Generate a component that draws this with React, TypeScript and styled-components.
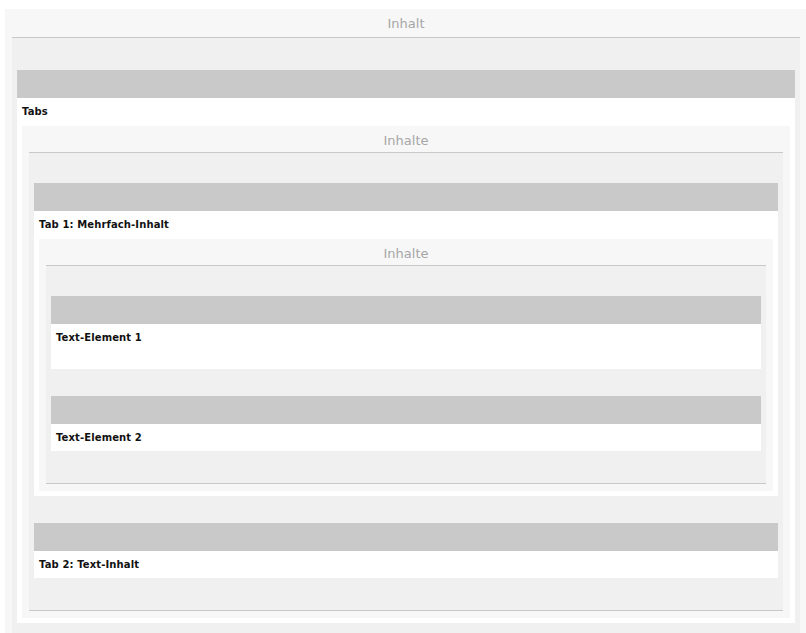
import React from "react";
import styled, {createGlobalStyle} from "styled-components";

type Node = {
    label: string;
    filler?: number;
    children?: {title: string; items: Node[]};
};

const tree: {title: string; items: Node[]} = {
    title: "Inhalt",
    items: [{
        label: "Tabs",
        children: {
            title: "Inhalte",
            items: [
                {
                    label: "Tab 1: Mehrfach-Inhalt",
                    children: {
                        title: "Inhalte",
                        items: [
                            {label: "Text-Element 1", filler: 18},
                            {label: "Text-Element 2"},
                        ],
                    },
                },
                {label: "Tab 2: Text-Inhalt"},
            ],
        },
    }],
};

const GlobalStyle = createGlobalStyle`
  html, body {
    margin: 0;
    background: #fff;
  }
  body {
    font-family: "DejaVu Sans", Verdana, sans-serif;
    overflow: hidden;
  }
`;

const Panel = styled.section<{ $outer?: boolean }>`
  background: #f7f7f7;
  padding: ${p => p.$outer ? "0 6px 7px 7px" : "0 7px 7px"};
  margin: ${p => p.$outer ? "9px 0 0 5px" : "1px 0 0"};
`;

const PanelTitle = styled.div<{ $height: number; $shift: number }>`
  box-sizing: content-box;
  height: ${p => p.$height - p.$shift * 2}px;
  padding-top: ${p => p.$shift * 2}px;
  line-height: ${p => p.$height - p.$shift * 2}px;
  text-align: center;
  font-size: 13px;
  color: #a6a6a6;
  border-bottom: 1px solid #c8c8c8;
`;

const PanelBody = styled.div<{ $top: number }>`
  display: flex;
  flex-direction: column;
  gap: 27px;
  background: #f0f0f0;
  padding: ${p => p.$top}px 5px 32px;
  border-bottom: 1px solid #c8c8c8;
`;

const Element = styled.div`
  display: flex;
  flex-direction: column;
`;

const ElementBar = styled.div`
  height: 28px;
  background: #c9c9c9;
`;

const ElementBody = styled.div<{ $bottom: number }>`
  background: #fff;
  padding: 0 5px ${p => p.$bottom}px;
`;

const ElementLabel = styled.div`
  height: 27px;
  line-height: 27px;
  font-size: 10px;
  font-weight: bold;
  letter-spacing: 0.12px;
  color: #111;
`;

const Filler = styled.div<{ $height: number }>`
  height: ${p => p.$height}px;
`;

function ContentPanel({title, items, outer}: { title: string; items: Node[]; outer?: boolean }) {
    return <Panel $outer={outer}>
        <PanelTitle $height={outer ? 28 : 26} $shift={outer ? 1 : 2}>{title}</PanelTitle>
        <PanelBody $top={outer ? 32 : 30}>
            {items.map((item, i) => <ContentElement key={i} {...item}/>)}
        </PanelBody>
    </Panel>
}

function ContentElement({label, filler, children}: Node) {
    return <Element>
        <ElementBar/>
        <ElementBody $bottom={children ? 5 : 0}>
            <ElementLabel>{label}</ElementLabel>
            {filler ? <Filler $height={filler}/> : null}
            {children ? <ContentPanel title={children.title} items={children.items}/> : null}
        </ElementBody>
    </Element>
}

export default function App(): JSX.Element {
    return <>
        <GlobalStyle/>
        <ContentPanel title={tree.title} items={tree.items} outer/>
    </>
}
